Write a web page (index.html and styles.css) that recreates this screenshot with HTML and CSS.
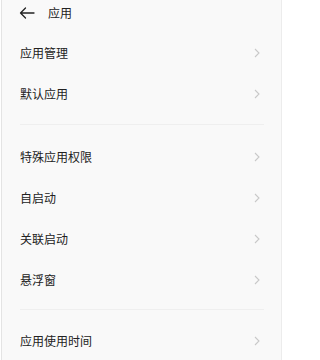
FILE: index.html
```html
<!DOCTYPE html>
<html lang="zh">
<head>
<meta charset="utf-8">
<link rel="stylesheet" href="styles.css">
</head>
<body>
<div class="frame">
  <div class="header">
    <svg class="back" width="16" height="12" viewBox="0 0 16 12"><path d="M15 6H1.5M6.5 1L1.5 6L6.5 11" fill="none" stroke="#222" stroke-width="1.3" stroke-linecap="round" stroke-linejoin="round"/></svg>
    <span class="title">应用</span>
  </div>
  <div class="group first">
    <div class="row"><span>应用管理</span><svg class="chev" width="6" height="10" viewBox="0 0 6 10"><path d="M1 1L5 5L1 9" fill="none" stroke="#c9c9c9" stroke-width="1.1"/></svg></div>
    <div class="row"><span>默认应用</span><svg class="chev" width="6" height="10" viewBox="0 0 6 10"><path d="M1 1L5 5L1 9" fill="none" stroke="#c9c9c9" stroke-width="1.1"/></svg></div>
  </div>
  <div class="divider d1"></div>
  <div class="group">
    <div class="row"><span>特殊应用权限</span><svg class="chev" width="6" height="10" viewBox="0 0 6 10"><path d="M1 1L5 5L1 9" fill="none" stroke="#c9c9c9" stroke-width="1.1"/></svg></div>
    <div class="row"><span>自启动</span><svg class="chev" width="6" height="10" viewBox="0 0 6 10"><path d="M1 1L5 5L1 9" fill="none" stroke="#c9c9c9" stroke-width="1.1"/></svg></div>
    <div class="row"><span>关联启动</span><svg class="chev" width="6" height="10" viewBox="0 0 6 10"><path d="M1 1L5 5L1 9" fill="none" stroke="#c9c9c9" stroke-width="1.1"/></svg></div>
    <div class="row"><span>悬浮窗</span><svg class="chev" width="6" height="10" viewBox="0 0 6 10"><path d="M1 1L5 5L1 9" fill="none" stroke="#c9c9c9" stroke-width="1.1"/></svg></div>
  </div>
  <div class="divider d2"></div>
  <div class="group">
    <div class="row"><span>应用使用时间</span><svg class="chev" width="6" height="10" viewBox="0 0 6 10"><path d="M1 1L5 5L1 9" fill="none" stroke="#c9c9c9" stroke-width="1.1"/></svg></div>
  </div>
</div>
</body>
</html>
```
FILE: styles.css
```css
html, body {
  margin: 0;
  padding: 0;
  background: #ffffff;
}
body {
  font-family: "Noto Sans CJK SC", "Noto Sans", sans-serif;
  color: #222222;
  width: 284px;
  height: 360px;
  overflow: hidden;
}
.frame {
  margin-left: 1px;
  width: 279px;
  height: 360px;
  border-left: 1px solid #e4e4e4;
  border-right: 1px solid #ececec;
  background: #f9f9f9;
  overflow: hidden;
}
.header {
  height: 26px;
  display: flex;
  align-items: center;
  padding-left: 17px;
}
.back {
  display: block;
}
.title {
  font-size: 12px;
  margin-left: 13px;
  line-height: 1;
}
.group.first {
  margin-top: 6px;
}
.row {
  height: 41px;
  display: flex;
  align-items: center;
  justify-content: space-between;
  padding-left: 18px;
  padding-right: 21px;
  font-size: 12px;
  line-height: 1;
}
.chev {
  display: block;
}
.divider {
  height: 1px;
  background: #efefef;
  margin-left: 18px;
  margin-right: 17px;
}
.d1 {
  margin-top: 10px;
  margin-bottom: 11px;
}
.d2 {
  margin-top: 9px;
  margin-bottom: 10px;
}
```
